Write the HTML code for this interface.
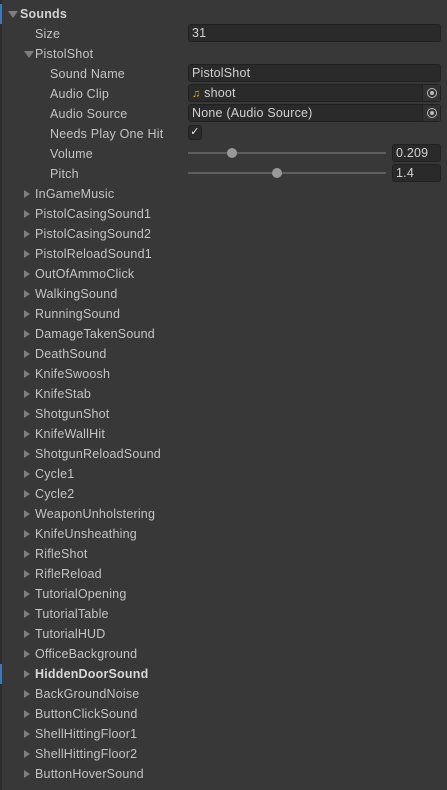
<!DOCTYPE html>
<html><head><style>
*{margin:0;padding:0;box-sizing:border-box}
body{width:447px;height:790px;background:#383838;font-family:"Liberation Sans",sans-serif;font-size:12.5px;letter-spacing:0.2px;color:#c4c4c4;position:relative;overflow:hidden}
.r{position:absolute;left:0;width:447px;height:20px;line-height:20px;white-space:nowrap}
.l{position:absolute;top:0}
.a{position:absolute;top:6px;width:0;height:0;border-top:4px solid transparent;border-bottom:4px solid transparent;border-left:6px solid #7d7d7d}
.d{position:absolute;top:7px;width:0;height:0;border-left:5px solid transparent;border-right:5px solid transparent;border-top:7px solid #7d7d7d}
.f{position:absolute;top:0px;height:18px;line-height:16px;background:#2a2a2a;border:1px solid #212121;border-radius:3px;padding-left:3px;color:#d2d2d2}
.bar{position:absolute;left:0;width:2px;height:20px;background:#3a79bb}
.t{position:absolute;top:8px;height:2px;background:#5e5e5e;left:188px;width:198px}
.th{position:absolute;top:4px;width:10px;height:10px;border-radius:50%;background:#999}
.o{position:absolute;right:0;top:0;width:18px;height:16px;border-left:1px solid #222;background:#313131}
.o:after{content:"";position:absolute;left:4px;top:3px;width:8px;height:8px;border:1px solid #bbb;border-radius:50%}
.o:before{content:"";position:absolute;left:7px;top:6px;width:4px;height:4px;background:#bbb;border-radius:50%;z-index:1}
</style></head><body>
<div style="position:absolute;left:0;top:0;width:2px;height:790px;background:#2c2c2c"></div>
<div class="r" style="top:4px"><div class="bar"></div><div class="d" style="left:8px"></div><span class="l" style="left:20px;font-weight:bold;color:#d2d2d2">Sounds</span></div>
<div class="r" style="top:24px"><span class="l" style="left:35px">Size</span><div class="f" style="left:188px;width:253px">31</div></div>
<div class="r" style="top:44px"><div class="d" style="left:24px"></div><span class="l" style="left:35px">PistolShot</span></div>
<div class="r" style="top:64px"><span class="l" style="left:50px">Sound Name</span><div class="f" style="left:188px;width:253px">PistolShot</div></div>
<div class="r" style="top:84px"><span class="l" style="left:50px">Audio Clip</span><div class="f" style="left:188px;width:253px"><span style="color:#e8b400;font-size:11px">♫</span> shoot<div class="o"></div></div></div>
<div class="r" style="top:104px"><span class="l" style="left:50px">Audio Source</span><div class="f" style="left:188px;width:253px">None (Audio Source)<div class="o"></div></div></div>
<div class="r" style="top:124px"><span class="l" style="left:50px">Needs Play One Hit</span><div class="f" style="left:188px;width:14px;height:15px;top:1px;padding:0;text-align:center;line-height:13px;font-size:11px;color:#eee">✓</div></div>
<div class="r" style="top:144px"><span class="l" style="left:50px">Volume</span><div class="t"></div><div class="th" style="left:227px"></div><div class="f" style="left:392px;width:49px">0.209</div></div>
<div class="r" style="top:164px"><span class="l" style="left:50px">Pitch</span><div class="t"></div><div class="th" style="left:272px"></div><div class="f" style="left:392px;width:49px">1.4</div></div>
<div id="list"></div>
<script>
var n=["InGameMusic","PistolCasingSound1","PistolCasingSound2","PistolReloadSound1","OutOfAmmoClick","WalkingSound","RunningSound","DamageTakenSound","DeathSound","KnifeSwoosh","KnifeStab","ShotgunShot","KnifeWallHit","ShotgunReloadSound","Cycle1","Cycle2","WeaponUnholstering","KnifeUnsheathing","RifleShot","RifleReload","TutorialOpening","TutorialTable","TutorialHUD","OfficeBackground","HiddenDoorSound","BackGroundNoise","ButtonClickSound","ShellHittingFloor1","ShellHittingFloor2","ButtonHoverSound"];
var h="";n.forEach(function(s,i){var b=s=="HiddenDoorSound";h+='<div class="r" style="top:'+(184+20*i)+'px">'+(b?'<div class="bar"></div>':'')+'<div class="a" style="left:24px"></div><span class="l" style="left:35px'+(b?';font-weight:bold;color:#d8d8d8':'')+'">'+s+'</span></div>';});
document.getElementById("list").innerHTML=h;
</script>
</body></html>
